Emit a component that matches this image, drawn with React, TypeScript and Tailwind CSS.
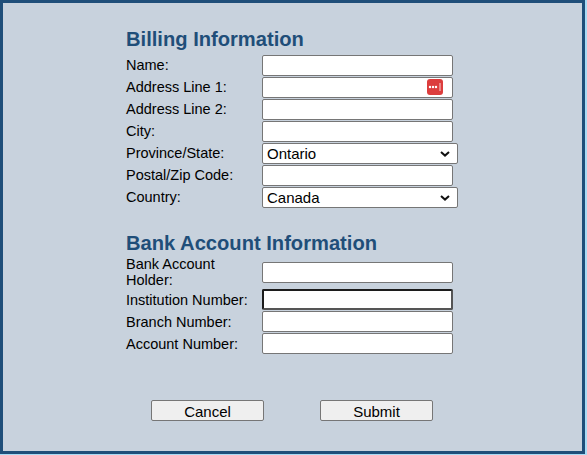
import React from "react";

const font = "font-['Liberation_Sans',Arial,sans-serif]";

function Row({ label, low, children }: { label: string; low?: boolean; children: React.ReactNode }) {
  return (
    <div className="flex items-center min-h-[22px]">
      <label className={low ? "w-[136px] shrink-0 pt-[2px] text-[14.5px] leading-[16px] text-black" : "w-[136px] shrink-0 text-[14.5px] leading-[16px] text-black"}>{label}</label>
      {children}
    </div>
  );
}

function TextInput({ focused }: { focused?: boolean }) {
  return (
    <input
      type="text"
      className={
        focused
          ? "block w-[191px] h-[21px] bg-white rounded-[2px] border-2 border-t-[#1c1c1c] border-l-[#1c1c1c] border-r-[#555] border-b-[#555] outline-none"
          : "block w-[191px] h-[21px] bg-white rounded-[2px] border border-[#767676] outline-none"
      }
    />
  );
}

function Picker({ value }: { value: string }) {
  return (
    <div className="relative">
      <select
        defaultValue={value}
        className="block w-[196px] h-[21px] pl-[4px] bg-white rounded-[2px] border border-[#767676] text-[15px] leading-[17px] text-black outline-none appearance-none"
      >
        <option>{value}</option>
      </select>
      <svg className="absolute left-[178px] top-[8px]" width="10" height="6" viewBox="0 0 10 6" fill="none">
        <path d="M1 1l4 3.6L9 1" stroke="#111" strokeWidth="2" />
      </svg>
    </div>
  );
}

function PasswordIcon() {
  return (
    <svg className="absolute left-[164.5px] top-[2px]" width="16" height="16" viewBox="0 0 16 16">
      <rect x="0" y="0" width="16" height="16" rx="3" fill="#dc3d3d" />
      <circle cx="3" cy="8" r="1.2" fill="#fff" />
      <circle cx="6" cy="8" r="1.2" fill="#fff" />
      <circle cx="9" cy="8" r="1.2" fill="#fff" />
      <rect x="12.5" y="4" width="1" height="8" fill="#f8d0d0" />
    </svg>
  );
}

export default function App() {
  return (
    <div className={`${font} w-[587px] h-[455px] bg-[#a9dcf5]`}>
      <div className="w-[585px] h-[454px] bg-[#c8d2dd] border-[3px] border-[#1f4e79] pl-[123px] pt-[23px]">
        <h2 className="text-[20.15px] leading-[26px] font-bold text-[#1f4e79] mb-[2px]">Billing Information</h2>
        <Row label="Name:"><TextInput /></Row>
        <Row label="Address Line 1:">
          <div className="relative">
            <TextInput />
            <PasswordIcon />
          </div>
        </Row>
        <Row label="Address Line 2:"><TextInput /></Row>
        <Row label="City:"><TextInput /></Row>
        <Row label="Province/State:"><Picker value="Ontario" /></Row>
        <Row label="Postal/Zip Code:"><TextInput /></Row>
        <Row label="Country:"><Picker value="Canada" /></Row>

        <h2 className="text-[20.15px] leading-[26px] font-bold text-[#1f4e79] mt-[22px]">Bank Account Information</h2>
        <Row label="Bank Account Holder:"><TextInput /></Row>
        <Row label="Institution Number:" low><TextInput focused /></Row>
        <Row label="Branch Number:" low><TextInput /></Row>
        <Row label="Account Number:" low><TextInput /></Row>

        <div className="flex gap-[56px] ml-[25px] mt-[46px]">
          <button className="w-[113px] h-[21px] pt-[2px] bg-[#efefef] border border-[#767676] rounded-[2px] text-[15px] leading-[16px] text-black">Cancel</button>
          <button className="w-[113px] h-[21px] pt-[2px] bg-[#efefef] border border-[#767676] rounded-[2px] text-[15px] leading-[16px] text-black">Submit</button>
        </div>
      </div>
    </div>
  );
}
